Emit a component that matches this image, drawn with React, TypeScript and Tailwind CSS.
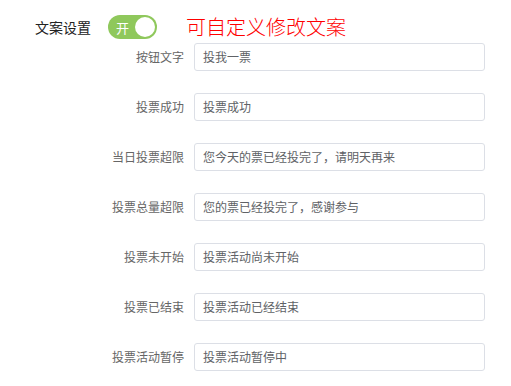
import React from 'react';

const rows = [
  { label: '按钮文字', value: '投我一票' },
  { label: '投票成功', value: '投票成功' },
  { label: '当日投票超限', value: '您今天的票已经投完了，请明天再来' },
  { label: '投票总量超限', value: '您的票已经投完了，感谢参与' },
  { label: '投票未开始', value: '投票活动尚未开始' },
  { label: '投票已结束', value: '投票活动已经结束' },
  { label: '投票活动暂停', value: '投票活动暂停中' },
];

export default function App() {
  return (
    <div className="w-[511px] h-[386px] bg-white overflow-hidden font-['Noto_Sans_CJK_SC','Noto_Sans',sans-serif]">
      {/* Header */}
      <div className="flex items-center h-[24px] mt-[15px] pl-[35px]">
        <span className="text-[14px] text-[#222] leading-none">文案设置</span>
        <div className="ml-[17px] w-[49px] h-[24px] rounded-full bg-[#8fc85c] flex items-center justify-between pl-[8px] pr-[2px]">
          <span className="text-[13px] text-white leading-none">开</span>
          <span className="w-[20px] h-[20px] rounded-full bg-white" />
        </div>
        <span className="ml-[29px] text-[20px] font-light text-[#ff0000] leading-none">可自定义修改文案</span>
      </div>

      {/* Form */}
      <div className="mt-[4px] flex flex-col gap-[22px]">
        {rows.map(r => (
          <div key={r.label} className="flex items-center">
            <label className="w-[184px] text-right text-[12px] text-[#666]">{r.label}</label>
            <div className="ml-[10px] w-[291px] h-[28px] border border-[#dcdfe6] rounded-[3px] flex items-center px-[8px] text-[12px] text-[#606266]">
              {r.value}
            </div>
          </div>
        ))}
      </div>
    </div>
  );
}
